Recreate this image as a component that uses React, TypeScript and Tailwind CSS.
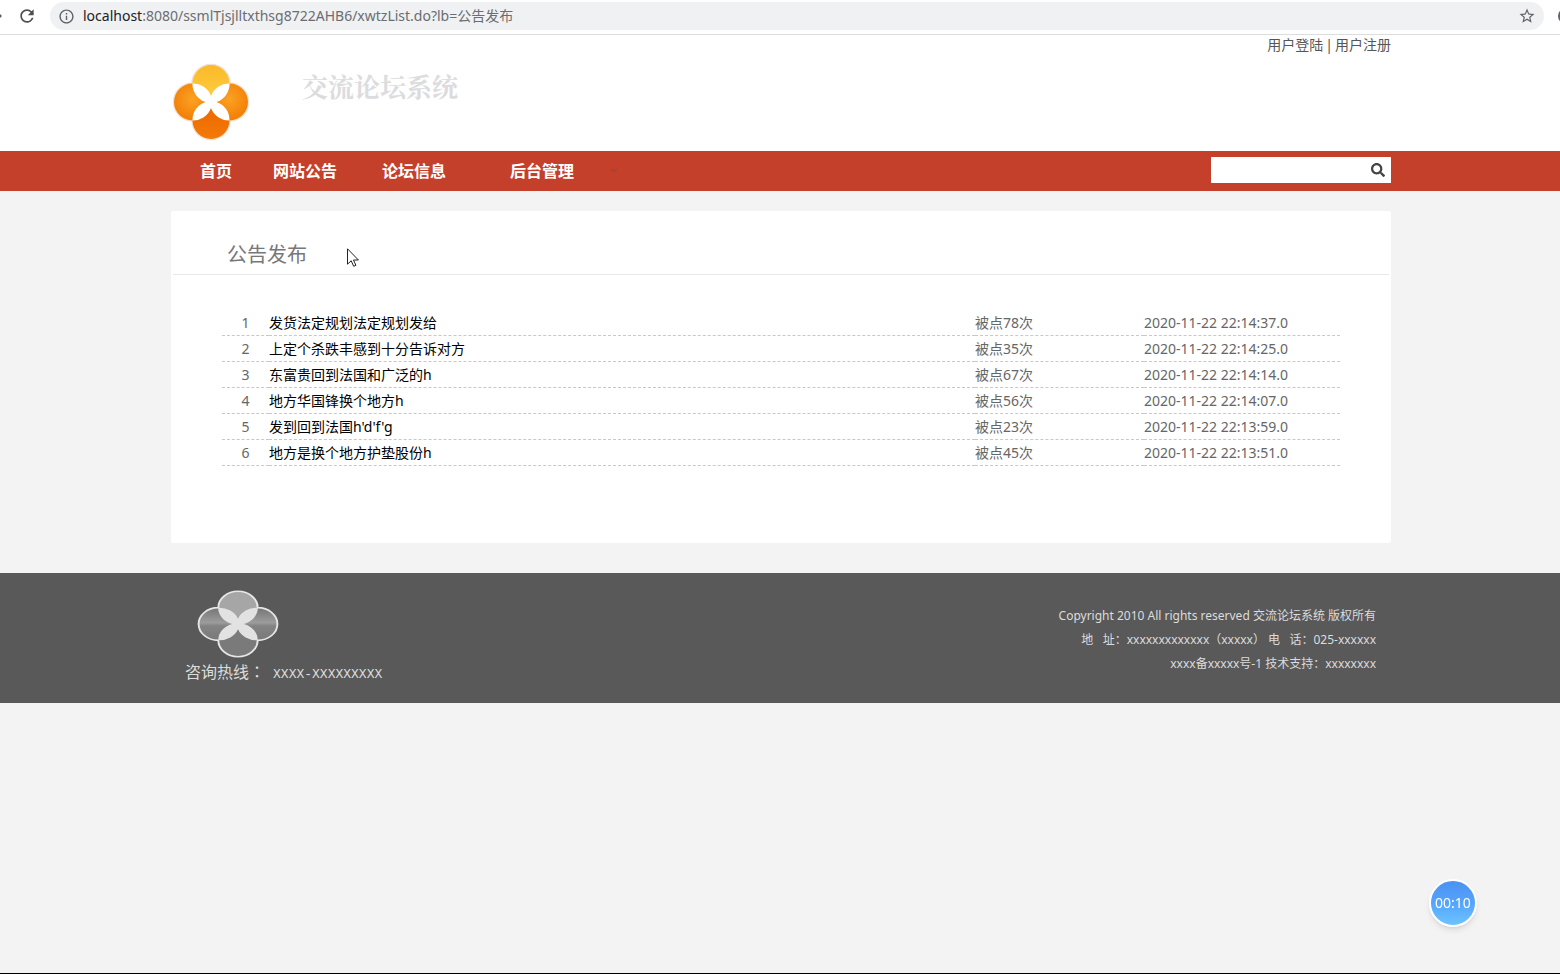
import React from "react";
import { MdRefresh, MdStarBorder, MdInfoOutline } from "react-icons/md";
import { FaSearch } from "react-icons/fa";

type Notice = { id: number; title: string; clicks: number; time: string };

const notices: Notice[] = [
  { id: 1, title: "发货法定规划法定规划发给", clicks: 78, time: "2020-11-22 22:14:37.0" },
  { id: 2, title: "上定个杀跌丰感到十分告诉对方", clicks: 35, time: "2020-11-22 22:14:25.0" },
  { id: 3, title: "东富贵回到法国和广泛的h", clicks: 67, time: "2020-11-22 22:14:14.0" },
  { id: 4, title: "地方华国锋换个地方h", clicks: 56, time: "2020-11-22 22:14:07.0" },
  { id: 5, title: "发到回到法国h'd'f'g", clicks: 23, time: "2020-11-22 22:13:59.0" },
  { id: 6, title: "地方是换个地方护垫股份h", clicks: 45, time: "2020-11-22 22:13:51.0" },
];

const petals =
  "M-18.5 -18.5A19 19 0 0 1 0 -6A19 19 0 0 1 18.5 -18.5A19 19 0 0 1 5.5 0A19 19 0 0 1 18.5 18.5A19 19 0 0 1 0 6A19 19 0 0 1 -18.5 18.5A19 19 0 0 1 -5.5 0A19 19 0 0 1 -18.5 -18.5Z";
const clover =
  "M-18.5 -18.5A18.5 18.5 0 0 1 18.5 -18.5A18.5 18.5 0 0 1 18.5 18.5A18.5 18.5 0 0 1 -18.5 18.5A18.5 18.5 0 0 1 -18.5 -18.5Z";

function SiteLogo() {
  return (
    <svg viewBox="-40 -40 80 80" className="h-20 w-20" role="img" aria-label="交流论坛系统">
      <defs>
        <linearGradient id="topPetal" x1="0" y1="0" x2="0" y2="1">
          <stop offset="0" stopColor="#fbb928" />
          <stop offset="1" stopColor="#fdcf45" />
        </linearGradient>
        <radialGradient id="sidePetal" cx="0.5" cy="0.42" r="0.6">
          <stop offset="0" stopColor="#fba222" />
          <stop offset="1" stopColor="#f27c05" />
        </radialGradient>
        <linearGradient id="bottomPetal" x1="0" y1="0" x2="0" y2="1">
          <stop offset="0" stopColor="#ed6600" />
          <stop offset="1" stopColor="#f37a08" />
        </linearGradient>
      </defs>
      <path d={clover} fill="none" stroke="#f1e2d4" strokeWidth="2.5" />
      <circle cx="-18.5" cy="0" r="18.5" fill="url(#sidePetal)" />
      <circle cx="18.5" cy="0" r="18.5" fill="url(#sidePetal)" />
      <circle cx="0" cy="-18.5" r="18.5" fill="url(#topPetal)" />
      <circle cx="0" cy="18.5" r="18.5" fill="url(#bottomPetal)" />
      <path d={petals} fill="#fff" />
    </svg>
  );
}

function FooterLogo() {
  return (
    <svg viewBox="-38.5 -38.5 77 77" preserveAspectRatio="none" className="h-[68px] w-[82px]" aria-hidden="true">
      <defs>
        <linearGradient id="greySide" x1="0" y1="0" x2="0" y2="1">
          <stop offset="0" stopColor="#757575" />
          <stop offset="0.46" stopColor="#9c9c9c" />
          <stop offset="0.56" stopColor="#838383" />
          <stop offset="1" stopColor="#7a7a7a" />
        </linearGradient>
      </defs>
      <circle cx="-18.5" cy="0" r="18.5" fill="url(#greySide)" />
      <circle cx="18.5" cy="0" r="18.5" fill="url(#greySide)" />
      <circle cx="0" cy="-18.5" r="18.5" fill="#a6a6a6" />
      <circle cx="0" cy="18.5" r="18.5" fill="#7a7a7a" />
      <path d={petals} fill="#e2e2e2" />
      <path d={clover} fill="none" stroke="#e6e6e6" strokeWidth="1.8" />
    </svg>
  );
}

function BrowserBar() {
  return (
    <div className="flex h-[35px] shrink-0 items-start overflow-hidden border-b border-[#dcdddf] bg-white pt-0.5">
      <div className="flex h-7 w-[50px] shrink-0 items-center">
        <svg viewBox="0 0 4 8" className="h-2 w-1" aria-hidden="true">
          <path d="M0 2L2 4L0 6Z" fill="#5f6368" />
        </svg>
        <button type="button" aria-label="Reload" className="ml-[13px] text-[#4a4d51]">
          <MdRefresh size={20} />
        </button>
      </div>
      <div className="flex h-7 grow items-center rounded-full bg-[#f0f1f3] pr-2 pl-2">
        <MdInfoOutline size={17} className="mr-2 shrink-0 text-[#5f6368]" />
        <span className="grow text-sm whitespace-nowrap text-[#6a6d71]">
          <span className="text-[#202124]">localhost</span>:8080/ssmlTjsjlltxthsg8722AHB6/xwtzList.do?lb=公告发布
        </span>
        <button type="button" aria-label="Bookmark" className="text-[#5f6368]">
          <MdStarBorder size={18} />
        </button>
      </div>
      <div className="flex h-7 w-4 shrink-0 items-center overflow-hidden pl-3.5">
        <span className="h-4 w-4 shrink-0 rounded-full bg-[#5f6368]" />
      </div>
    </div>
  );
}

export default function App() {
  const cell = "border-b border-dashed border-[#c8c8c8] p-0 leading-[25px]";
  return (
    <div className="relative flex min-h-screen flex-col border-b border-black bg-[#f3f3f3] font-['Noto_Sans','Noto_Sans_CJK_SC',sans-serif] text-sm text-[#666]">
      <BrowserBar />

      <header className="bg-white">
        <div className="mx-auto flex h-[116px] max-w-[1222px] justify-between pl-0.5">
          <div className="flex">
            <div className="mt-[27px]">
              <SiteLogo />
            </div>
            <h1 className="mt-[34px] ml-[51px] font-['Liberation_Serif','Noto_Serif_CJK_SC','Noto_Sans_CJK_SC',serif] text-[26px] leading-10 font-bold text-[#dcdcde]">
              交流论坛系统
            </h1>
          </div>
          <div className="flex gap-0.5 leading-5 text-[#555]">
            <a href="#login">用户登陆</a>
            <span>|</span>
            <a href="#register">用户注册</a>
          </div>
        </div>
      </header>

      <nav className="bg-[#c5402b]">
        <div className="mx-auto flex h-10 max-w-[1222px] justify-between pl-[31px]">
          <div className="flex items-center text-base font-bold text-white">
            <a href="#home" className="mr-[41px]">首页</a>
            <a href="#notice" className="mr-[45px]">网站公告</a>
            <a href="#forum" className="mr-16">论坛信息</a>
            <a href="#admin">后台管理</a>
            <svg viewBox="0 0 8 4" className="ml-9 h-1 w-2" aria-hidden="true">
              <path d="M0 0H8L4 4Z" fill="#8a4a38" opacity="0.5" />
            </svg>
          </div>
          <form className="mt-1.5 flex h-[26px] w-[180px] items-center bg-white pr-1" onSubmit={(e) => e.preventDefault()}>
            <input type="text" aria-label="搜索" className="h-full min-w-0 grow bg-transparent px-2 outline-none" />
            <button type="submit" aria-label="搜索" className="p-0.5 text-[#444]">
              <FaSearch size={14} />
            </button>
          </form>
        </div>
      </nav>

      <div className="mx-auto mt-5 w-full max-w-[1222px] pl-0.5">
        <main className="rounded-xs bg-white pb-[77px]">
          <h2 className="relative mx-0.5 border-b border-[#e8e8e8] pt-[29px] pb-[5px] pl-[54px] text-xl leading-[29px] text-[#777]">
            公告发布
            <svg viewBox="0 0 12 19" className="absolute top-[37px] left-[174px] h-[19px] w-3" aria-hidden="true">
              <path
                d="M.5 .8V16.2L4.2 12.8L6.7 18.3L8.9 17.3L6.5 12H11.4Z"
                fill="#fff"
                stroke="#222"
                strokeWidth="1"
                strokeLinejoin="round"
              />
            </svg>
          </h2>
          <div className="px-[51px] pt-[35px]">
            <table className="w-full table-fixed border-separate border-spacing-0 text-left">
              <colgroup>
                <col className="w-[47px]" />
                <col />
                <col className="w-[169px]" />
                <col className="w-[196px]" />
              </colgroup>
              <tbody>
                {notices.map((n) => (
                  <tr key={n.id}>
                    <td className={`${cell} text-center`}>{n.id}</td>
                    <td className={`${cell} text-black`}>
                      <a href="#detail">{n.title}</a>
                    </td>
                    <td className={cell}>被点{n.clicks}次</td>
                    <td className={cell}>{n.time}</td>
                  </tr>
                ))}
              </tbody>
            </table>
          </div>
        </main>
      </div>

      <footer className="mt-[30px] bg-[#595959] text-[#dcdcdc]">
        <div className="mx-auto flex h-[130px] max-w-[1222px] justify-between pr-[15px] pl-4">
          <div className="pt-[17px]">
            <div className="pl-3">
              <FooterLogo />
            </div>
            <p className="flex items-baseline text-base leading-[26px]">
              咨询热线
              <span className="font-['Noto_Sans_CJK_TC',sans-serif]">：</span>
              <span className="ml-2 font-['Liberation_Mono',monospace] text-[13px]">XXXX-XXXXXXXXX</span>
            </p>
          </div>
          <div className="pt-[31px] text-right text-xs leading-6">
            <p>Copyright 2010 All rights reserved 交流论坛系统 版权所有</p>
            <p className="whitespace-pre">地   址：xxxxxxxxxxxxx（xxxxx） 电   话：025-xxxxxx</p>
            <p>xxxx备xxxxx号-1 技术支持：xxxxxxxx</p>
          </div>
        </div>
      </footer>

      <div className="fixed right-[83px] bottom-[47px] flex h-12 w-12 items-center justify-center rounded-full border-2 border-white bg-linear-to-b from-[#4b92f2] via-[#55a4fb] to-[#6cc4ff] text-sm text-white shadow-md">
        00:10
      </div>
    </div>
  );
}
